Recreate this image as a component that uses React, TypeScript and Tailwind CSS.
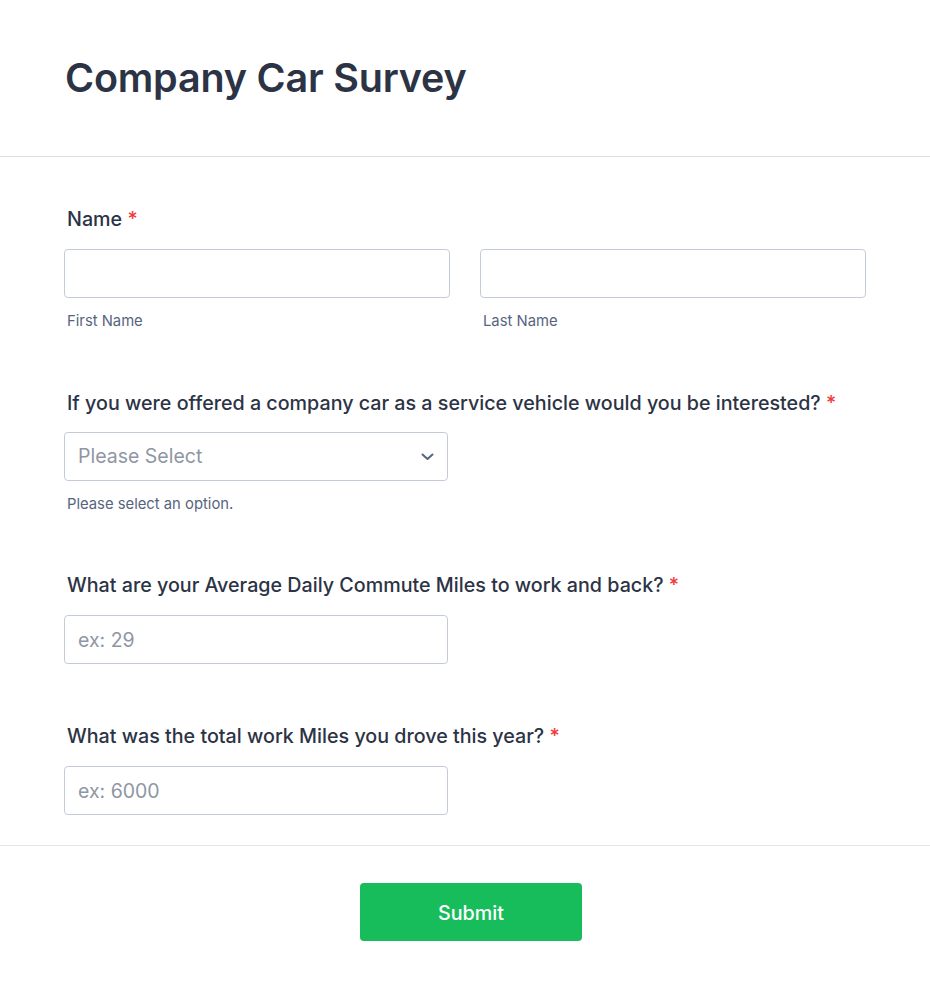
import React from "react";

const font = { fontFamily: "Inter, 'Noto Sans', sans-serif" };

function Label({ children }: { children: React.ReactNode }) {
  return (
    <div className="text-[19.7px] leading-[24px] font-medium text-[#2c3345] pl-[3px]">
      {children} <span className="text-[#f23a3c]">*</span>
    </div>
  );
}

function TextInput({ placeholder }: { placeholder?: string }) {
  return (
    <input
      type="text"
      placeholder={placeholder}
      className="w-full h-[49px] border border-[#c3cad8] rounded-[4px] px-[13px] text-[19.5px] text-[#2c3345] placeholder:text-[#8f96a3] outline-none bg-white"
      style={font}
    />
  );
}

export default function App() {
  return (
    <div className="w-full min-h-[992px] bg-white" style={font}>
      <div className="h-[157px] border-b border-[#dadde6] flex items-center px-[65px]">
        <h1 className="text-[39.5px] leading-[46px] font-semibold text-[#2c3345] tracking-[-0.2px]">
          Company Car Survey
        </h1>
      </div>

      <div className="px-[64px] pt-[50px]">
        <Label>Name</Label>
        <div className="flex gap-[30px] mt-[18px]">
          <div className="w-[386px]">
            <TextInput />
            <div className="mt-[13px] text-[14.8px] leading-[20px] text-[#57647e] pl-[3px]">First Name</div>
          </div>
          <div className="w-[386px]">
            <TextInput />
            <div className="mt-[13px] text-[14.8px] leading-[20px] text-[#57647e] pl-[3px]">Last Name</div>
          </div>
        </div>

        <div className="mt-[60px]">
          <Label>If you were offered a company car as a service vehicle would you be interested?</Label>
          <div className="mt-[17px] w-[384px] h-[49px] border border-[#c3cad8] rounded-[4px] flex items-center justify-between pl-[13px] pr-[13px]">
            <span className="text-[19.5px] text-[#8f96a3]">Please Select</span>
            <svg width="13" height="8" viewBox="0 0 13 8" fill="none">
              <path d="M1.5 1.5L6.5 6L11.5 1.5" stroke="#57647e" strokeWidth="2" strokeLinecap="round" strokeLinejoin="round" />
            </svg>
          </div>
          <div className="mt-[13px] text-[14.8px] leading-[20px] text-[#57647e] pl-[3px]">Please select an option.</div>
        </div>

        <div className="mt-[59px]">
          <Label>What are your Average Daily Commute Miles to work and back?</Label>
          <div className="mt-[18px] w-[384px]">
            <TextInput placeholder="ex: 29" />
          </div>
        </div>

        <div className="mt-[60px]">
          <Label>What was the total work Miles you drove this year?</Label>
          <div className="mt-[18px] w-[384px]">
            <TextInput placeholder="ex: 6000" />
          </div>
        </div>
      </div>

      <div className="mt-[30px] border-t border-[#e3e5ec] flex justify-center pl-[12px] pt-[37px] pb-[50px]">
        <button className="w-[222px] h-[58px] pt-[3px] rounded-[4px] bg-[#18bd5b] text-white text-[19.7px] font-medium" style={font}>
          Submit
        </button>
      </div>
    </div>
  );
}
